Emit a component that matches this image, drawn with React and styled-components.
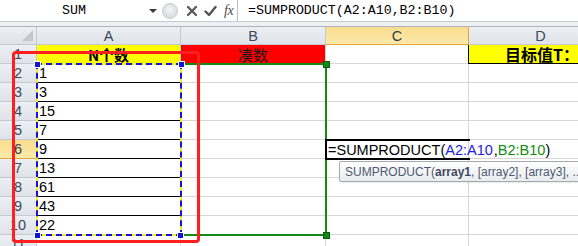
import styled, { createGlobalStyle, css } from 'styled-components';

const GlobalStyle = createGlobalStyle`
    html, body {
        margin: 0;
        padding: 0;
        background: #ffffff;
    }
    body {
        font-family: "Liberation Sans", Arial, sans-serif;
    }
`;

const COLS = ['A', 'B', 'C', 'D'];
const VALUES = [1, 3, 15, 7, 9, 13, 61, 43, 22];
const CJK = `"Noto Sans CJK SC", "Liberation Sans", sans-serif`;

const Frame = styled.div`
    width: 578px;
    height: 246px;
    overflow: hidden;
    position: relative;
    background: #fff;
`;

const FormulaBar = styled.div`
    display: flex;
    align-items: stretch;
    height: 21px;
    background: #fff;
    border-bottom: 1px solid #c6cbd2;
`;

const NameBox = styled.div`
    position: relative;
    width: 160px;
    display: flex;
    align-items: center;
    justify-content: center;
    font-family: "Liberation Mono", monospace;
    font-size: 13.3px;
    color: #000;
    padding-right: 12px;
    box-sizing: border-box;
`;

const DropArrow = styled.span`
    position: absolute;
    right: 3px;
    top: 9px;
    border-left: 4px solid transparent;
    border-right: 4px solid transparent;
    border-top: 4px solid #3a3a3a;
`;

const Buttons = styled.div`
    width: 78px;
    display: flex;
    align-items: center;
    gap: 6px;
    border-right: 1px solid #b9bec6;
    box-sizing: border-box;
`;

const Knob = styled.span`
    width: 16px;
    height: 16px;
    border-radius: 50%;
    border: 1px solid #c9ccd1;
    background: radial-gradient(circle at 50% 40%, #f4f5f6 0%, #d9dcdf 70%, #c7cace 100%);
    box-sizing: border-box;
    margin-left: 2px;
    margin-right: 2px;
`;

const Fx = styled.span`
    font-family: "Liberation Serif", serif;
    font-style: italic;
    font-size: 14px;
    color: #4b4b4b;
    letter-spacing: -0.5px;
    margin-left: 1px;
`;

const FormulaText = styled.div`
    flex: 1;
    display: flex;
    align-items: center;
    padding-left: 10px;
    font-family: "Liberation Mono", monospace;
    font-size: 13.3px;
    color: #000;
    white-space: nowrap;
`;

const Strip = styled.div`
    height: 4px;
    background: #eef0f3;
    border-bottom: 1px solid #aeb4bc;
`;

const Sheet = styled.div`
    position: relative;
`;

const Grid = styled.div`
    display: grid;
    grid-template-columns: 37px 144px 145px 143px 144px;
    grid-template-rows: 18px repeat(11, 19px);
`;

const headerBase = css`
    box-sizing: border-box;
    display: flex;
    align-items: center;
    justify-content: center;
    font-family: "Liberation Sans", Arial, sans-serif;
    font-size: 14.5px;
    color: #3b4a5e;
    border-right: 1px solid #c5cad1;
    border-bottom: 1px solid #c5cad1;
    background: ${(p) => (p.$active ? 'linear-gradient(#f9dc8f, #fde9a9)' : 'linear-gradient(#eceff3, #dfe3e9)')};
    ${(p) => p.$active && css`
        border-bottom-color: #e4a53c;
        color: #2f3e54;
    `}
`;

const Corner = styled.div`
    ${headerBase};
    position: relative;
    &::after {
        content: '';
        position: absolute;
        right: 3px;
        bottom: 3px;
        border-left: 11px solid transparent;
        border-bottom: 11px solid #c4c8ce;
    }
`;

const ColHead = styled.div`
    ${headerBase};
    ${(p) => p.$active && css`border-right-color: #e4a53c;`}
`;

const RowHead = styled.div`
    ${headerBase};
    ${(p) => p.$active && css`border-right-color: #e4a53c;`}
`;

const Cell = styled.div`
    box-sizing: border-box;
    display: flex;
    align-items: center;
    padding: 0 2px;
    font-family: "Liberation Sans", Arial, sans-serif;
    font-size: 14.5px;
    color: #000;
    white-space: nowrap;
    border-right: 1px solid #d6d6d6;
    border-bottom: 1px solid ${(p) => (p.$ruled ? '#000' : '#d6d6d6')};
    background: ${(p) => p.$bg || '#fff'};
    justify-content: ${(p) => p.$align || 'flex-start'};
`;

const Title = styled.span`
    font-family: ${CJK};
    font-size: ${(p) => p.$size || 14}px;
    font-weight: ${(p) => (p.$bold ? 700 : 400)};
    color: ${(p) => p.$color || '#000'};
    line-height: 1;
`;

const TargetCell = styled(Cell)`
    border-left: 1px solid #000;
    border-bottom: 1px solid #000;
    margin-left: -1px;
    padding-left: 36px;
`;

const RedBox = styled.div`
    position: absolute;
    left: 12px;
    top: 24px;
    width: 188px;
    height: 192px;
    box-sizing: border-box;
    border: 3px solid #ff1f1f;
    border-radius: 4px;
    pointer-events: none;
`;

const Range = styled.div`
    position: absolute;
    box-sizing: border-box;
    pointer-events: none;
`;

const BlueRange = styled(Range)`
    left: 36px;
    top: 36px;
    width: 146px;
    height: 173px;
    border: 2px solid #f2ee2a;
    &::after {
        content: '';
        position: absolute;
        inset: -2px;
        border: 2px dashed #1414d8;
    }
`;

const GreenRange = styled(Range)`
    left: 180px;
    top: 36px;
    width: 147px;
    height: 173px;
    border: 2px solid #138a13;
    border-left: none;
`;

const Handle = styled.span`
    position: absolute;
    width: 5px;
    height: 5px;
    background: ${(p) => p.$color};
    border: 1px solid ${(p) => (p.$color === '#138a13' ? '#0b5d0b' : '#ffffff')};
    left: ${(p) => p.$x - 3}px;
    top: ${(p) => p.$y - 3}px;
`;

const ActiveCell = styled.div`
    position: absolute;
    left: 325px;
    top: 112px;
    width: 145px;
    height: 21px;
    box-sizing: border-box;
    border: 2px solid #000;
    border-right: none;
    display: flex;
    align-items: center;
    padding-left: 1px;
    font-family: "Liberation Sans", Arial, sans-serif;
    font-size: 14.5px;
    white-space: nowrap;
    overflow: visible;
`;

const Ref = styled.span`
    color: ${(p) => p.$color};
`;

const Caret = styled.span`
    display: inline-block;
    width: 1px;
    height: 16px;
    background: #000;
    vertical-align: middle;
    margin: 0 0 0 1px;
`;

const Tip = styled.div`
    position: absolute;
    left: 339px;
    top: 134px;
    height: 21px;
    width: 260px;
    box-sizing: border-box;
    border: 1px solid #a6a9ae;
    border-radius: 2px;
    background: linear-gradient(#ffffff, #e9ebee);
    display: flex;
    align-items: center;
    padding-left: 5px;
    font-family: "Liberation Sans", Arial, sans-serif;
    font-size: 12px;
    color: #4d5a72;
    white-space: nowrap;
    box-shadow: 1px 1px 1px rgba(0, 0, 0, 0.08);
    b {
        color: #3e4960;
    }
`;

const CrossIcon = () => (
    <svg width="12" height="12" viewBox="0 0 12 12">
        <path d="M2 2 L10 10 M10 2 L2 10" stroke="#555" strokeWidth="2.2" strokeLinecap="round" />
    </svg>
);

const CheckIcon = () => (
    <svg width="13" height="12" viewBox="0 0 13 12">
        <path d="M1.5 6.5 L5 10 L11.5 2" stroke="#555" strokeWidth="2.4" fill="none" strokeLinecap="round" strokeLinejoin="round" />
    </svg>
);

const cellFor = (row, col) => {
    if (row === 1) {
        if (col === 'A') return <Cell $bg="#ffff00" $align="center"><Title $bold $size={15}>N个数</Title></Cell>;
        if (col === 'B') return <Cell $bg="#ff0000" $align="center"><Title $color="#1a1a1a" $size={15}>凑数</Title></Cell>;
        if (col === 'D') return <TargetCell $bg="#ffff00"><Title $bold $size={16}>目标值T：</Title></TargetCell>;
        return <Cell />;
    }
    if (col === 'A' && row <= 10) return <Cell $ruled>{VALUES[row - 2]}</Cell>;
    return <Cell />;
};

const App = () => {
    const rows = Array.from({ length: 11 }, (_, i) => i + 1);
    return (
        <Frame>
            <GlobalStyle />
            <FormulaBar>
                <NameBox>
                    SUM
                    <DropArrow />
                </NameBox>
                <Buttons>
                    <Knob />
                    <CrossIcon />
                    <CheckIcon />
                    <Fx>fx</Fx>
                </Buttons>
                <FormulaText>=SUMPRODUCT(A2:A10,B2:B10)</FormulaText>
            </FormulaBar>
            <Strip />
            <Sheet>
                <Grid>
                    <Corner />
                    {COLS.map((c) => (
                        <ColHead key={c} $active={c === 'C'}>{c}</ColHead>
                    ))}
                    {rows.map((r) => [
                        <RowHead key={`h${r}`} $active={r === 6}>{r}</RowHead>,
                        ...COLS.map((c) => <div key={`${c}${r}`} style={{ display: 'contents' }}>{cellFor(r, c)}</div>),
                    ])}
                </Grid>
                <GreenRange />
                <BlueRange />
                <Handle $color="#1414d8" $x={37} $y={37} />
                <Handle $color="#1414d8" $x={181} $y={37} />
                <Handle $color="#1414d8" $x={37} $y={208} />
                <Handle $color="#1414d8" $x={180} $y={208} />
                <Handle $color="#138a13" $x={326} $y={37} />
                <Handle $color="#138a13" $x={326} $y={208} />
                <RedBox />
                <ActiveCell>
                    =SUMPRODUCT(<Ref $color="#2323e0">A2:A10</Ref><Caret />,<Ref $color="#118a11">B2:B10</Ref>)
                </ActiveCell>
                <Tip>
                    SUMPRODUCT(<b>array1</b>, [array2], [array3], ...)
                </Tip>
            </Sheet>
        </Frame>
    );
};

export default App;
